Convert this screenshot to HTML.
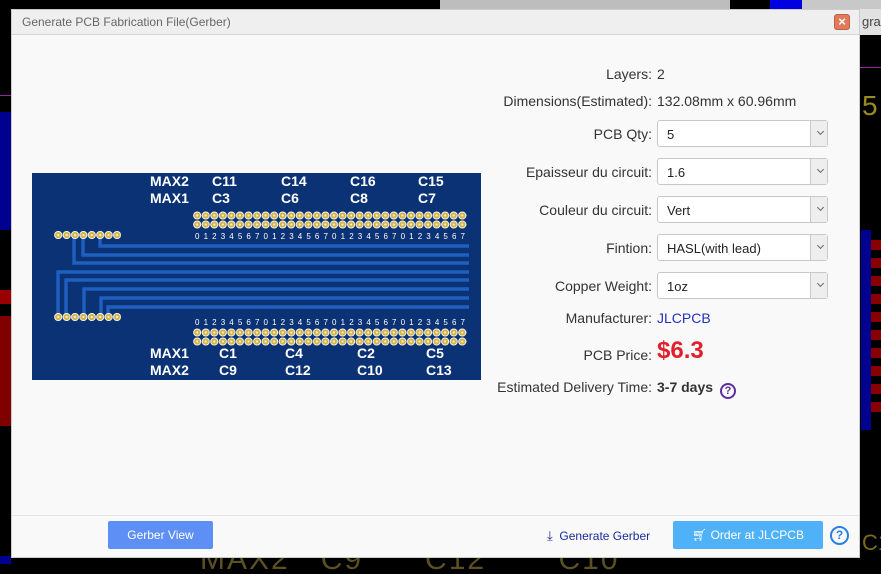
<!DOCTYPE html>
<html><head><meta charset="utf-8"><style>
*{margin:0;padding:0;box-sizing:border-box}
html,body{width:881px;height:574px;overflow:hidden}
body{background:#000;position:relative;font-family:"Liberation Sans",Arial,sans-serif}
.abs{position:absolute}
#dlg{left:11px;top:9px;width:849px;height:549px;background:#f9f9f9;border:1px solid #ccc}
#title{left:0;top:0;width:847px;height:25px;background:#efefef;border-bottom:1px solid #d6d6d6;font-size:12px;color:#666;padding:5px 0 0 10px}
#close{left:822px;top:4px;width:16px;height:16px;background:#e07a5a;border:1px solid #c0603f;border-radius:3px;color:#fff;font-size:13px;font-weight:bold;text-align:center;line-height:14px}
.lbl{position:absolute;right:207px;font-size:14px;color:#333;white-space:nowrap}
.val{position:absolute;left:645px;font-size:14px;color:#333;white-space:nowrap}
.sel{position:absolute;left:645px;width:171px;height:27px;background:#fff;border:1px solid #c8c8c8;border-radius:3px;font-size:13px;color:#222;padding:6px 0 0 9px}
.sel:after{content:"";position:absolute;right:0;top:0;width:16px;height:25px;background:#eee;border-left:1px solid #c8c8c8}
.sel i{position:absolute;right:4px;top:8px;width:5px;height:5px;border-right:1px solid #666;border-bottom:1px solid #666;transform:rotate(45deg);z-index:2}
#foot{left:0;top:505px;width:847px;height:1px;background:#e4e4e4}
</style></head><body>
<div class="abs" style="left:440px;top:0;width:290px;height:9px;background:#bdbdbd"></div>
<div class="abs" style="left:770px;top:0;width:32px;height:9px;background:#0000e0"></div>
<div class="abs" style="left:802px;top:0;width:79px;height:9px;background:#c8c8c8"></div>
<div class="abs" style="left:860px;top:9px;width:21px;height:26px;background:#e2e2e2;font-size:13px;color:#444;padding:5px 0 0 2px">grap</div>
<div class="abs" style="left:860px;top:67px;width:21px;height:1px;background:#a020a0"></div>
<div class="abs" style="left:0;top:95px;width:11px;height:1px;background:#a020a0"></div>
<div class="abs" style="left:0;top:112px;width:11px;height:118px;background:#000090"></div>
<div class="abs" style="left:0;top:290px;width:11px;height:14px;background:#900"></div>
<div class="abs" style="left:0;top:316px;width:11px;height:110px;background:#800000"></div>
<div class="abs" style="left:0;top:556px;width:11px;height:8px;background:#000090"></div>
<div class="abs" style="left:861px;top:230px;width:10px;height:200px;background:#000090"></div>
<div class="abs" style="left:871px;top:240px;width:10px;height:180px;background:repeating-linear-gradient(#800 0 10px,#000 10px 18px)"></div>
<div class="abs" style="left:862px;top:90px;font-size:28px;color:#9a8a20">5</div>
<div class="abs" style="left:862px;top:530px;font-size:22px;color:#7a6a20">C1</div>
<div class="abs" style="left:200px;top:543px;font-size:30px;color:#5a5020;letter-spacing:2px">MAX2 &nbsp; C9 &nbsp;&nbsp;&nbsp;&nbsp; C12 &nbsp;&nbsp;&nbsp;&nbsp;&nbsp; C10</div>

<div id="dlg" class="abs">
<div id="title" class="abs">Generate PCB Fabrication File(Gerber)</div>
<div id="close" class="abs">×</div>

<svg class="abs" style="left:20px;top:163px" width="449" height="207" viewBox="32 173 449 207">
<defs>
<pattern id="pd" x="193" y="211" width="8.55" height="9" patternUnits="userSpaceOnUse">
<circle cx="4.2" cy="4.5" r="3.6" fill="#d2b44a" stroke="#fff" stroke-width="0.9"/><circle cx="4.2" cy="4.5" r="1.1" fill="#fff6c0"/></pattern>
<pattern id="pl" x="54" y="230.5" width="8.4" height="82" patternUnits="userSpaceOnUse">
<circle cx="4.2" cy="4.5" r="3.6" fill="#d2b44a" stroke="#fff" stroke-width="0.9"/><circle cx="4.2" cy="4.5" r="1.1" fill="#fff6c0"/></pattern>
</defs>
<rect x="32" y="173" width="449" height="207" fill="#0b3275"/>
<g stroke="#1e5fc0" stroke-width="3.4" fill="none">
<path d="M100 235V246H469M83 235V255H469M74 235V263H469M58 317V272H469M66 317V280H469M84 317V289H469M101 317V298H469M108 317V307H469"/>
</g>
<rect x="193" y="211" width="274" height="18" fill="url(#pd)"/>
<rect x="193" y="328" width="274" height="18" fill="url(#pd)"/>
<rect x="54" y="230.5" width="67" height="9" fill="url(#pl)"/>
<rect x="54" y="312.5" width="67" height="9" fill="url(#pl)"/>
<g fill="#fff" font-family="Liberation Sans,Arial" font-weight="bold" font-size="14">
<text x="150" y="186">MAX2</text><text x="212" y="186">C11</text><text x="281" y="186">C14</text><text x="350" y="186">C16</text><text x="418" y="186">C15</text>
<text x="150" y="203">MAX1</text><text x="212" y="203">C3</text><text x="281" y="203">C6</text><text x="350" y="203">C8</text><text x="418" y="203">C7</text>
<text x="150" y="358">MAX1</text><text x="219" y="358">C1</text><text x="285" y="358">C4</text><text x="357" y="358">C2</text><text x="426" y="358">C5</text>
<text x="150" y="375">MAX2</text><text x="219" y="375">C9</text><text x="285" y="375">C12</text><text x="357" y="375">C10</text><text x="426" y="375">C13</text>
</g>
<g fill="#fff" font-family="Liberation Sans,Arial" font-size="8">
<text x="195" y="239" textLength="270">01234567012345670123456701234567</text>
<text x="195" y="325" textLength="270">01234567012345670123456701234567</text>
</g>
</svg>

<div class="lbl" style="top:56px">Layers:</div><div class="val" style="top:56px">2</div>
<div class="lbl" style="top:83px">Dimensions(Estimated):</div><div class="val" style="top:83px">132.08mm x 60.96mm</div>
<div class="lbl" style="top:116px">PCB Qty:</div><div class="sel" style="top:110px">5<i></i></div>
<div class="lbl" style="top:154px">Epaisseur du circuit:</div><div class="sel" style="top:148px">1.6<i></i></div>
<div class="lbl" style="top:192px">Couleur du circuit:</div><div class="sel" style="top:186px">Vert<i></i></div>
<div class="lbl" style="top:230px">Fintion:</div><div class="sel" style="top:224px">HASL(with lead)<i></i></div>
<div class="lbl" style="top:268px">Copper Weight:</div><div class="sel" style="top:262px">1oz<i></i></div>
<div class="lbl" style="top:300px">Manufacturer:</div><div class="val" style="top:300px;color:#2233bb">JLCPCB</div>
<div class="lbl" style="top:337px">PCB Price:</div><div class="val" style="top:327px;color:#e0202a;font-size:24px;font-weight:bold">$6.3</div>
<div class="lbl" style="top:369px">Estimated Delivery Time:</div><div class="val" style="top:369px;font-weight:bold">3-7 days <span style="display:inline-block;width:16px;height:16px;border:2px solid #5a2ea0;border-radius:50%;color:#5a2ea0;font-size:11px;text-align:center;line-height:12px;vertical-align:-2px;margin-left:3px">?</span></div>

<div id="foot" class="abs"></div>
<div class="abs" style="left:96px;top:511px;width:105px;height:28px;background:#5d8ff4;border-radius:2px;color:#fff;font-size:12px;text-align:center;line-height:28px">Gerber View</div>
<div class="abs" style="left:535px;top:518px;font-size:12px;color:#1a2a99"><span style="font-size:13px">⤓</span>&nbsp; Generate Gerber</div>
<div class="abs" style="left:661px;top:511px;width:150px;height:28px;background:#4fb1f7;border-radius:2px;color:#fff;font-size:12px;text-align:center;line-height:28px">🛒︎ Order at JLCPCB</div>
<div class="abs" style="left:818px;top:516px;width:19px;height:19px;border:2px solid #2a7fe0;border-radius:50%;color:#2a7fe0;font-size:12px;font-weight:bold;text-align:center;line-height:15px">?</div>
</div>
</body></html>
